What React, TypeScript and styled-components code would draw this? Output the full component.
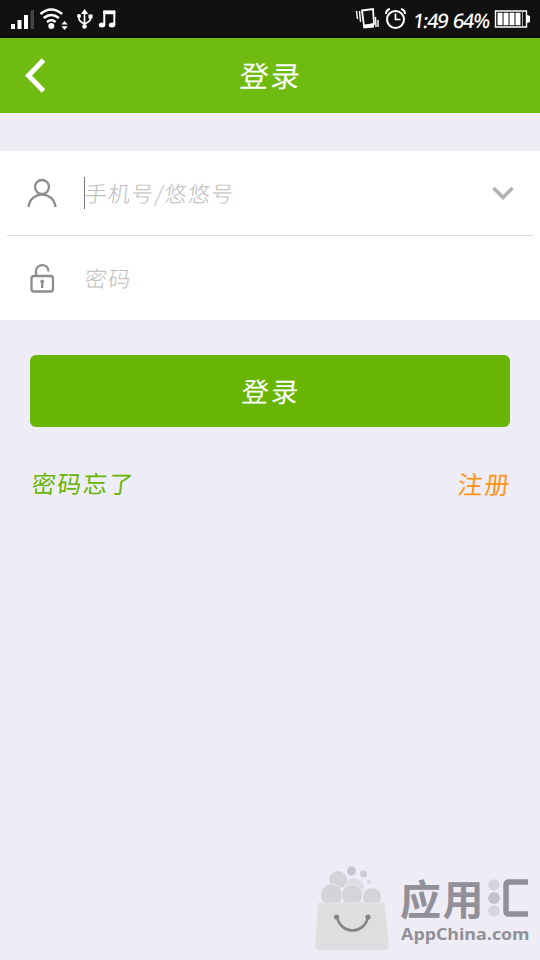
import React from 'react';
import styled, { createGlobalStyle } from 'styled-components';

const GlobalStyle = createGlobalStyle`
  * { box-sizing: border-box; }
  body { margin: 0; background: #eeedf6; font-family: 'Noto Sans CJK SC', sans-serif; }
`;

const Screen = styled.div`
  width: 540px;
  height: 960px;
  display: flex;
  flex-direction: column;
  background: #eeedf6;
  overflow: hidden;
`;

const StatusBar = styled.div`
  height: 38px;
  flex: none;
  display: flex;
  justify-content: space-between;
  background: #111;
  border-bottom: 2px solid #0b0b05;
`;

const StatusIcons = styled.svg`
  display: block;
  height: 36px;
`;

const StatusGroup = styled.div`
  display: flex;
`;

const Clock = styled.div`
  width: 86px;
  padding: 5px 0 0 6px;
  display: flex;
  align-items: center;
  gap: 4px;
`;

const StatusText = styled.span<{ $width: number }>`
  width: ${(p) => p.$width}px;
  flex: none;
  font: 500 20px/30px 'Noto Sans', sans-serif;
  letter-spacing: -1.3px;
  white-space: nowrap;
  color: #fff;
  transform: skewX(-7deg);
`;

const Header = styled.header`
  height: 75px;
  flex: none;
  display: grid;
  grid-template-columns: 72px 1fr 72px;
  align-items: center;
  background: #6fbb11;
`;

const BackButton = styled.button`
  height: 75px;
  padding: 0;
  border: 0;
  background: none;
`;

const Script = styled.span<{ $size: number; $pitch: number; $color: string; $weight?: number }>`
  display: inline-block;
  font-size: ${(p) => p.$size}px;
  font-weight: ${(p) => p.$weight ?? 400};
  line-height: 1.3;
  letter-spacing: ${(p) => p.$pitch - p.$size}px;
  margin-right: ${(p) => p.$size - p.$pitch}px;
  color: ${(p) => p.$color};
  transform: skewX(-6deg);
  white-space: nowrap;
`;

const Title = styled.h1`
  margin: 0;
  padding-bottom: 2px;
  text-align: center;
  line-height: 1;
  font-weight: 400;
`;

const Form = styled.form`
  display: flex;
  flex-direction: column;
`;

const Fields = styled.div`
  margin-top: 38px;
  height: 169px;
  background: #fff;
`;

const Field = styled.label<{ $divided?: boolean }>`
  height: ${(p) => (p.$divided ? 85 : 84)}px;
  margin: 0 7px;
  display: grid;
  grid-template-columns: 77px 1fr 61px;
  align-items: center;
  border-bottom: ${(p) => (p.$divided ? '1px solid #dcdcdc' : '0')};
`;

const FieldIcon = styled.svg`
  width: 32px;
  height: 32px;
  margin-left: 19px;
  fill: none;
  stroke: #8d8d8d;
  stroke-width: 2.3;
`;

const FieldText = styled.div<{ $focused?: boolean }>`
  height: 32px;
  padding-bottom: 2px;
  display: flex;
  align-items: center;
  border-left: 1.5px solid ${(p) => (p.$focused ? '#777' : 'transparent')};
`;

const Chevron = styled.svg`
  width: 24px;
  height: 16px;
  justify-self: center;
  fill: none;
  stroke: #b2b2b2;
  stroke-width: 3.6;
`;

const LoginButton = styled.button`
  height: 72px;
  margin: 35px 30px 0;
  padding: 0;
  border: 0;
  border-radius: 6px;
  background: #68b504;
  font-family: inherit;
`;

const Links = styled.nav`
  margin: 37px 30px 0 32px;
  height: 38px;
  display: flex;
  justify-content: space-between;
  align-items: center;
`;

const Watermark = styled.footer`
  margin: auto 8px 8px auto;
  width: 219px;
  height: 86px;
  display: flex;
  gap: 9px;
`;

const Bag = styled.svg`
  width: 78px;
  height: 86px;
  flex: none;
`;

const Brand = styled.div`
  padding-top: 10px;
  color: #918f98;
`;

const BrandName = styled.div`
  height: 42px;
  display: flex;
  align-items: center;
`;

const BrandText = styled.span`
  width: 87px;
  flex: none;
  font-size: 41px;
  line-height: 42px;
  font-weight: 700;
  letter-spacing: 1.5px;
`;

const BrandMark = styled.svg`
  width: 44px;
  height: 42px;
  flex: none;
`;

const BrandUrl = styled.div`
  margin-top: 7px;
  padding-left: 1px;
  font: 700 16px/18px 'Open Sans', sans-serif;
  letter-spacing: 0;
  white-space: nowrap;
  transform: scaleX(1.112);
  transform-origin: left;
`;

export default function App() {
  return (
    <>
      <GlobalStyle />
      <Screen>
        <StatusBar>
          <StatusIcons width="124" viewBox="0 0 124 36" fill="none" stroke="#fff">
            <g fill="#fff" stroke="none">
              <rect x="11" y="24" width="4" height="5" />
              <rect x="17.5" y="20" width="4" height="9" />
              <rect x="24" y="15" width="4" height="14" />
              <rect x="30.5" y="10" width="3.5" height="19" fill="#444" />
              <circle cx="51.300" cy="26" r="3" />
              <path d="M61 24.500l3.500-4 3.500 4zM61 26.500l3.500 4 3.500-4z" transform="translate(6.500 2.500) scale(.9)" />
              <circle cx="84.500" cy="26.500" r="2.300" />
              <path d="M81 14l3.600-5 3.600 5z" />
              <rect x="88.500" y="14.500" width="4" height="4" />
              <circle cx="79" cy="16" r="2" />
              <ellipse cx="102" cy="25" rx="3.200" ry="2.500" />
              <ellipse cx="112" cy="25" rx="3.200" ry="2.500" />
            </g>
            <path d="M40.500 14q10.800-9 21.600 0M43.700 18q7.600-6 15.200 0M47 22q4.300-3.500 8.600 0" strokeWidth="2.400" />
            <path d="M84.500 12v14M79 16v3q0 2 5.500 5M90.500 17v2q0 2-6 5" strokeWidth="1.700" />
            <path d="M104.300 25V11.500h10V25" strokeWidth="2" />
            <path d="M103.300 12.500h12" strokeWidth="3.500" />
          </StatusIcons>
          <StatusGroup>
            <StatusIcons width="52" viewBox="355 0 52 36" fill="none" stroke="#fff">
              <path d="M362 10.500l11-1.500 1 15-10 2z" strokeWidth="1.800" />
              <path d="M363 25l11-1.500v4l-10.500 1z" fill="#fff" stroke="none" />
              <path d="M356.500 11l1 8M359.500 11l1 11M375.500 17l.5 10M378 20v7" strokeWidth="1.400" />
              <circle cx="395.500" cy="19.500" r="8.500" strokeWidth="2" />
              <path d="M395.500 13.500v6h5" strokeWidth="1.700" />
              <path d="M386 14q0-4 4-5M401 9q4 1 4 5" strokeWidth="2" />
            </StatusIcons>
            <Clock>
              <StatusText $width={36}>1:49</StatusText>
              <StatusText $width={36}>64%</StatusText>
            </Clock>
            <StatusIcons width="47" viewBox="493 0 47 36">
              <path d="M495.500 11h31v16h-31z" fill="none" stroke="#fff" strokeWidth="1.400" />
              <path d="M497.500 12.800h5v12.400h-5zM503.500 12.800h5v12.400h-5zM509.500 12.800h5v12.400h-5zM515.500 12.800h5v12.400h-5z" fill="#fff" />
              <path d="M522.500 12v14" stroke="#aaa" strokeWidth="1" />
              <path d="M527 15l3 1v6l-3 1z" fill="#fff" />
            </StatusIcons>
          </StatusGroup>
        </StatusBar>

        <Header>
          <BackButton type="button" aria-label="Back">
            <svg width="72" height="75" viewBox="0 0 72 75" fill="none" stroke="#fff" strokeWidth="5">
              <path d="M43.500 22L28.500 37.500 43.500 53" />
            </svg>
          </BackButton>
          <Title>
            <Script $size={29} $pitch={31} $color="#fff">登录</Script>
          </Title>
        </Header>

        <Form>
          <Fields>
            <Field $divided>
              <FieldIcon viewBox="0 0 32 32">
                <circle cx="16" cy="10" r="7" />
                <path d="M2.500 30C4.500 13.500 27.500 13.500 29.500 30" />
              </FieldIcon>
              <FieldText $focused>
                <Script $size={22} $pitch={23.3} $color="#bdbdbd" $weight={300}>手机号/悠悠号</Script>
              </FieldText>
              <Chevron viewBox="0 0 24 16">
                <path d="M2.500 3L12 12.500 21.500 3" />
              </Chevron>
            </Field>
            <Field>
              <FieldIcon viewBox="0 0 32 32">
                <rect x="5.500" y="14" width="21.500" height="15.500" rx="2.500" />
                <path d="M10 14V9C10 1 22.500 1 22.500 9.500" />
                <circle cx="16.200" cy="19.500" r="1.500" fill="#8d8d8d" strokeWidth="1" />
                <path d="M16.200 20v6" />
              </FieldIcon>
              <FieldText>
                <Script $size={22} $pitch={23.5} $color="#bdbdbd" $weight={300}>密码</Script>
              </FieldText>
            </Field>
          </Fields>
          <LoginButton type="button">
            <Script $size={27} $pitch={29.5} $color="#fff">登录</Script>
          </LoginButton>
          <Links>
            <Script $size={24} $pitch={25.7} $color="#68b504">密码忘了</Script>
            <Script $size={25} $pitch={27} $color="#ff9518">注册</Script>
          </Links>
        </Form>

        <Watermark>
          <Bag viewBox="0 0 78 86">
            <g fill="#d4d3d9">
              <circle cx="25" cy="14" r="9" />
              <circle cx="38.500" cy="5" r="4.500" fill="#c7c6cf" />
              <circle cx="50.500" cy="8" r="3.500" fill="#cdccd5" />
              <circle cx="56" cy="16" r="2.200" fill="#dddce4" />
              <circle cx="41" cy="22" r="10" fill="#dedde4" />
              <g stroke="#eeedf6" strokeWidth="1">
                <circle cx="18.500" cy="29" r="11" />
                <circle cx="39" cy="29" r="10.500" />
                <circle cx="59" cy="31" r="9.500" />
              </g>
            </g>
            <path d="M7 37h62q2 0 2.500 3l4 38q.5 6-5 6H7q-5 0-4.500-6l3-38q0-3 1.500-3z" fill="#dedede" stroke="#e3e2e8" strokeWidth="1.500" />
            <path d="M24 51C28 69 51 69 55 51" fill="none" stroke="#858585" strokeWidth="2.600" />
            <circle cx="23.500" cy="51" r="2.600" fill="#858585" />
            <circle cx="55" cy="51" r="2.600" fill="#858585" />
          </Bag>
          <Brand>
            <BrandName>
              <BrandText>应用</BrandText>
              <BrandMark viewBox="0 0 44 42" role="img" aria-label="汇">
                <g fill="#d6d5dd">
                  <circle cx="7" cy="9" r="5.800" />
                  <circle cx="7" cy="22" r="6" fill="#c3c2ca" />
                  <circle cx="7" cy="35" r="5.800" />
                </g>
                <path d="M41 6H22q-3 0-3 3v26q0 3 3 3h19" fill="none" stroke="#918f98" strokeWidth="5.500" />
              </BrandMark>
            </BrandName>
            <BrandUrl>AppChina.com</BrandUrl>
          </Brand>
        </Watermark>
      </Screen>
    </>
  );
}
